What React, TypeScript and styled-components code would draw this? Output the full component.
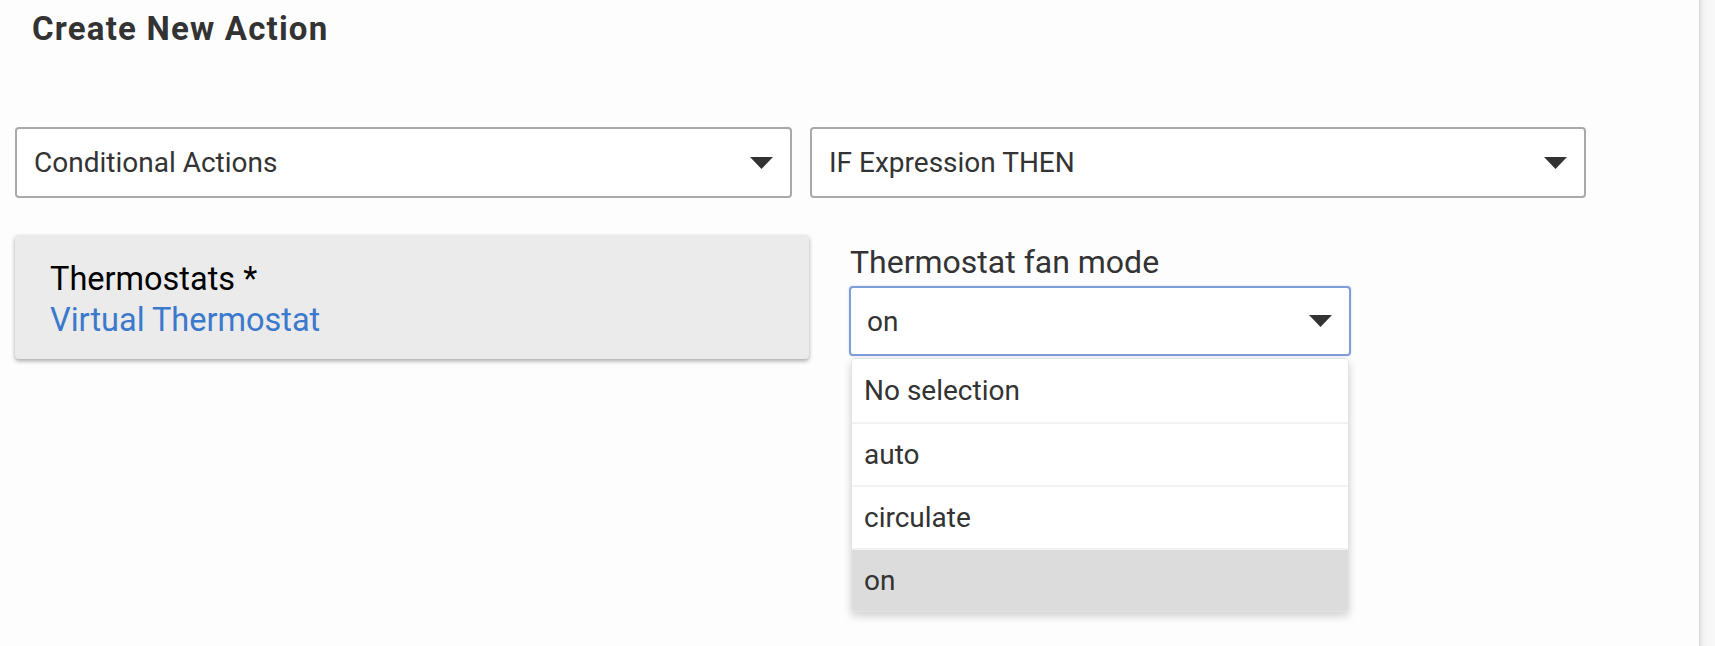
import React from "react";
import styled, { createGlobalStyle } from "styled-components";

const GlobalStyle = createGlobalStyle`
  html, body {
    margin: 0;
    padding: 0;
    background: #fdfdfd;
    font-family: Roboto, "Liberation Sans", Arial, sans-serif;
    color: #333;
  }
  * { box-sizing: border-box; }
`;

const Page = styled.div`
  display: flex;
  width: 1715px;
  height: 646px;
  overflow: hidden;
`;

const Main = styled.main`
  flex: 1;
  padding: 0 113px 0 15px;
  background: #fdfdfd;
`;

const SidePanel = styled.aside`
  width: 16px;
  background: linear-gradient(to right, #d9d9d9 0px, #eeeeee 3px, #f6f6f6 7px, #f8f8f8 100%);
`;

const Title = styled.h1`
  margin: 0;
  padding: 10px 0 0 17px;
  height: 127px;
  font-size: 33px;
  line-height: 38px;
  font-weight: 700;
  letter-spacing: 1.2px;
  color: #333;
`;

const SelectRow = styled.div`
  display: grid;
  grid-template-columns: 777px 776px;
  column-gap: 18px;
`;

const SelectBox = styled.div<{ $focused?: boolean }>`
  display: flex;
  align-items: center;
  justify-content: space-between;
  height: ${(p) => (p.$focused ? "70px" : "71px")};
  padding: 0 17px 0 ${(p) => (p.$focused ? "16px" : "17px")};
  border: 2px solid ${(p) => (p.$focused ? "#7f9ed8" : "#a9a9a9")};
  border-radius: 4px;
  background: #fff;
  font-size: 28px;
  color: #333;
  ${(p) => (p.$focused ? "box-shadow: 0 0 2px rgba(90,130,210,0.35);" : "")}
`;

const CaretSvg = styled.svg`
  flex: none;
  filter: blur(0.4px);
`;

const Caret = () => (
  <CaretSvg width="23" height="12" viewBox="0 0 23 12">
    <polygon points="0,0 23,0 11.5,12" fill="#333" />
  </CaretSvg>
);

const ContentRow = styled.div`
  display: grid;
  grid-template-columns: 794px 502px;
  column-gap: 40px;
  margin-top: 37px;
  align-items: start;
`;

const DeviceCard = styled.div`
  height: 124px;
  padding: 24px 35px 0;
  background: #ebebeb;
  border-radius: 4px;
  box-shadow: 0 2px 4px rgba(0, 0, 0, 0.35);
  font-size: 32.5px;
  line-height: 41px;
`;

const CardLabel = styled.div`
  color: #000;
`;

const CardLink = styled.div`
  color: #3b79cc;
`;

const Field = styled.div`
  margin-top: 8px;
`;

const FieldLabel = styled.div`
  font-size: 32px;
  line-height: 38px;
  color: #333;
  margin-bottom: 5px;
  padding-left: 1px;
`;

const SelectWrap = styled.div`
  position: relative;
`;

const Menu = styled.ul`
  position: absolute;
  left: 2px;
  right: 2px;
  top: calc(100% + 2px);
  margin: 0;
  padding: 0;
  list-style: none;
  background: #fff;
  border: 1px solid #e2e2e2;
  border-radius: 4px;
  overflow: hidden;
  box-shadow: 0 4px 8px rgba(0, 0, 0, 0.18);
`;

const MenuItem = styled.li<{ $selected?: boolean }>`
  height: 63px;
  display: flex;
  align-items: center;
  padding-left: 12px;
  font-size: 28px;
  color: #333;
  background: ${(p) => (p.$selected ? "#dcdcdc" : "#fff")};
  & + & {
    border-top: 2px solid #f2f2f2;
  }
`;

const options = ["No selection", "auto", "circulate", "on"];

export default function App() {
  return (
    <>
      <GlobalStyle />
      <Page>
        <Main>
          <Title>Create New Action</Title>
          <SelectRow>
            <SelectBox>
              <span>Conditional Actions</span>
              <Caret />
            </SelectBox>
            <SelectBox>
              <span>IF Expression THEN</span>
              <Caret />
            </SelectBox>
          </SelectRow>
          <ContentRow>
            <DeviceCard>
              <CardLabel>Thermostats *</CardLabel>
              <CardLink>Virtual Thermostat</CardLink>
            </DeviceCard>
            <Field>
              <FieldLabel>Thermostat fan mode</FieldLabel>
              <SelectWrap>
                <SelectBox $focused>
                  <span>on</span>
                  <Caret />
                </SelectBox>
                <Menu>
                  {options.map((o) => (
                    <MenuItem key={o} $selected={o === "on"}>
                      {o}
                    </MenuItem>
                  ))}
                </Menu>
              </SelectWrap>
            </Field>
          </ContentRow>
        </Main>
        <SidePanel />
      </Page>
    </>
  );
}
